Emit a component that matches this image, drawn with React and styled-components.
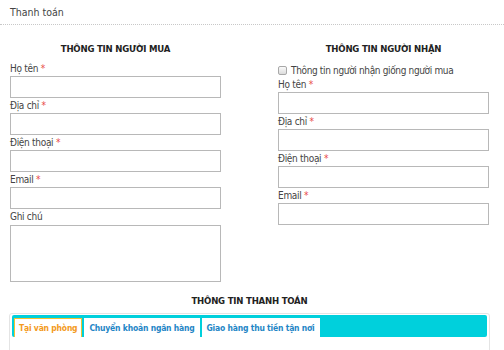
import React from 'react';
import styled, { createGlobalStyle } from 'styled-components';

const GlobalStyle = createGlobalStyle`
  body {
    margin: 0;
    background: #fff;
    font-family: "DejaVu Sans Condensed", "DejaVu Sans", sans-serif;
    font-size: 10px;
    color: #444;
  }
`;

const Page = styled.div`
  width: 504px;
  height: 350px;
  overflow: hidden;
`;

const PageTitle = styled.div`
  padding: 5px 10px 0;
  height: 19px;
  font-size: 10.5px;
  line-height: 14px;
  color: #444;
  border-bottom: 1px dotted #c8c8c8;
`;

const Columns = styled.div`
  display: grid;
  grid-template-columns: 211px 211px;
  column-gap: 57px;
  align-items: start;
  padding: 0 10px;
`;

const Column = styled.div`
  display: flex;
  flex-direction: column;
`;

const SectionTitle = styled.div`
  font-weight: bold;
  font-size: 9.5px;
  letter-spacing: -0.2px;
  color: #222;
  text-align: center;
  margin-top: ${p => p.$top ?? 17}px;
  height: 13px;
  line-height: 13px;
`;

const Label = styled.label`
  display: block;
  margin-top: ${p => p.$top ?? 1}px;
  height: 14px;
  line-height: 14px;
  letter-spacing: -0.3px;
  color: #444;
`;

const Star = styled.span`
  color: #e84848;
`;

const Input = styled.input`
  box-sizing: border-box;
  display: block;
  width: 211px;
  height: 22px;
  margin: 0;
  border: 1px solid #b8b8b8;
  border-radius: 0;
  padding: 0 4px;
  background: #fff;
`;

const TextArea = styled.textarea`
  box-sizing: border-box;
  display: block;
  width: 211px;
  height: 57px;
  margin: 1px 0 0;
  border: 1px solid #b8b8b8;
  resize: none;
`;

const CheckRow = styled.label`
  display: flex;
  align-items: center;
  gap: 4px;
  margin-top: 9px;
  height: 13px;
  letter-spacing: -0.35px;
  color: #444;
`;

const Check = styled.span`
  box-sizing: border-box;
  width: 9px;
  height: 9px;
  border: 1px solid #a8a8a8;
  border-radius: 2px;
  background: linear-gradient(#fafafa, #dcdcdc);
`;

const Payment = styled.div`
  padding: 0 14px 0 9px;
`;

const TabPanel = styled.div`
  margin-top: 6px;
  border: 1px solid #e4e4e4;
  border-radius: 3px;
  padding: 1px 2px 0 2px;
  height: 40px;
`;

const TabBar = styled.ul`
  list-style: none;
  margin: 0;
  padding: 3px 0 0 2px;
  display: flex;
  gap: 2px;
  height: 19px;
  background: #00d0dc;
  border-radius: 2px;
`;

const Tab = styled.li`
  box-sizing: border-box;
  height: 19px;
  padding: 0 4px;
  line-height: 18px;
  background: #fff;
  font-weight: bold;
  font-size: 8.5px;
  letter-spacing: -0.2px;
  white-space: nowrap;
  color: ${p => (p.$active ? '#f39a1c' : '#1f86c6')};
  border: 1px solid ${p => (p.$active ? '#f1c232' : '#fff')};
  border-bottom: none;
`;

const Field = ({ label, required, top }) => (
  <>
    <Label $top={top}>
      {label} {required && <Star>*</Star>}
    </Label>
    <Input type="text" />
  </>
);

export default function App() {
  return (
    <Page>
      <GlobalStyle />
      <PageTitle>Thanh toán</PageTitle>
      <Columns>
        <Column>
          <SectionTitle>THÔNG TIN NGƯỜI MUA</SectionTitle>
          <Field label="Họ tên" required top={7} />
          <Field label="Địa chỉ" required />
          <Field label="Điện thoại" required />
          <Field label="Email" required />
          <Label>Ghi chú</Label>
          <TextArea />
        </Column>
        <Column>
          <SectionTitle>THÔNG TIN NGƯỜI NHẬN</SectionTitle>
          <CheckRow>
            <Check />
            Thông tin người nhận giống người mua
          </CheckRow>
          <Field label="Họ tên" required top={1} />
          <Field label="Địa chỉ" required />
          <Field label="Điện thoại" required />
          <Field label="Email" required />
        </Column>
      </Columns>
      <Payment>
        <SectionTitle $top={12}>THÔNG TIN THANH TOÁN</SectionTitle>
        <TabPanel>
          <TabBar>
            <Tab $active>Tại văn phòng</Tab>
            <Tab>Chuyển khoản ngân hàng</Tab>
            <Tab>Giao hàng thu tiền tận nơi</Tab>
          </TabBar>
        </TabPanel>
      </Payment>
    </Page>
  );
}
